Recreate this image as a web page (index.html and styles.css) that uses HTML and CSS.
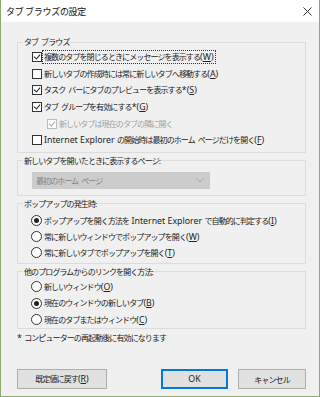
FILE: index.html
```html
<!DOCTYPE html>
<html lang="ja">
  <head>
    <meta charset="UTF-8" />
    <meta name="viewport" content="width=device-width, initial-scale=1.0" />
    <title>タブ ブラウズの設定</title>
    <link rel="stylesheet" href="styles.css">
  </head>
  <body>
    <div class="window">
      <!-- Title bar -->
      <div class="titlebar">
        <span class="title">タブ ブラウズの設定</span>
        <svg class="close" width="9" height="9" viewBox="0 0 9 9">
          <path d="M0.5 0.5 L8.5 8.5 M8.5 0.5 L0.5 8.5" stroke="#333" stroke-width="1" fill="none" />
        </svg>
      </div>

      <div class="content">
        <!-- Section: Tab browsing -->
        <fieldset class="group group-tabs">
          <legend>タブ ブラウズ</legend>
          <div class="option">
            <span class="box checked"></span>
            <span class="label focused">複数のタブを閉じるときにメッセージを表示する<span class="en">(<u>W</u>)</span></span>
          </div>
          <div class="option">
            <span class="box"></span>
            <span class="label">新しいタブの作成時には常に新しいタブへ移動する<span class="en">(<u>A</u>)</span></span>
          </div>
          <div class="option">
            <span class="box checked"></span>
            <span class="label">タスク バーにタブのプレビューを表示する<span class="en">*(<u>S</u>)</span></span>
          </div>
          <div class="option">
            <span class="box checked"></span>
            <span class="label">タブ グループを有効にする<span class="en">*(<u>G</u>)</span></span>
          </div>
          <div class="option sub disabled">
            <span class="box checked"></span>
            <span class="label">新しいタブは現在のタブの隣に開く</span>
          </div>
          <div class="option">
            <span class="box"></span>
            <span class="label"><span class="en">Internet Explorer </span>の開始時は最初のホーム ページだけを開く<span class="en">(<u>F</u>)</span></span>
          </div>
        </fieldset>

        <!-- Section: New tab page -->
        <fieldset class="group group-newtab">
          <legend>新しいタブを開いたときに表示するページ:</legend>
          <div class="select">
            <span>最初のホーム ページ</span>
            <svg width="8" height="5" viewBox="0 0 8 5">
              <path d="M0.5 0.5 L4 4 L7.5 0.5" stroke="#a6a6a6" stroke-width="1" fill="none" />
            </svg>
          </div>
        </fieldset>

        <!-- Section: Popups -->
        <fieldset class="group group-popup">
          <legend>ポップアップの発生時:</legend>
          <div class="option">
            <span class="radio selected"></span>
            <span class="label">ポップアップを開く方法を<span class="en"> Internet Explorer </span>で自動的に判定する<span class="en">(<u>I</u>)</span></span>
          </div>
          <div class="option">
            <span class="radio"></span>
            <span class="label">常に新しいウィンドウでポップアップを開く<span class="en">(<u>W</u>)</span></span>
          </div>
          <div class="option">
            <span class="radio"></span>
            <span class="label">常に新しいタブでポップアップを開く<span class="en">(<u>T</u>)</span></span>
          </div>
        </fieldset>

        <!-- Section: Links from other programs -->
        <fieldset class="group group-links">
          <legend>他のプログラムからのリンクを開く方法:</legend>
          <div class="option">
            <span class="radio"></span>
            <span class="label">新しいウィンドウ<span class="en">(<u>O</u>)</span></span>
          </div>
          <div class="option">
            <span class="radio selected"></span>
            <span class="label">現在のウィンドウの新しいタブ<span class="en">(<u>B</u>)</span></span>
          </div>
          <div class="option">
            <span class="radio"></span>
            <span class="label">現在のタブまたはウィンドウ<span class="en">(<u>C</u>)</span></span>
          </div>
        </fieldset>

        <p class="note"><span class="en">* </span>コンピューターの再起動後に有効になります</p>

        <!-- Dialog buttons -->
        <div class="buttons">
          <button class="btn btn-reset">既定値に戻す<span class="en">(<u>R</u>)</span></button>
          <button class="btn btn-ok"><span class="en">OK</span></button>
          <button class="btn btn-cancel">キャンセル</button>
        </div>
      </div>
    </div>
  </body>
</html>
```

FILE: styles.css
```css
body {
  margin: 0;
  font-family: "Noto Sans CJK JP", sans-serif;
  font-size: 8px;
  letter-spacing: -0.9px;
  word-spacing: 2px;
  color: #222;
}
.en {
  font-family: "Noto Sans", "Noto Sans CJK JP", sans-serif;
  font-size: 8.8px;
  letter-spacing: 0;
  word-spacing: 0;
}
.window {
  box-sizing: border-box;
  width: 320px;
  height: 397px;
  border: 1px solid #8fab6c;
  border-top: none;
  background-color: #f0f0f0;
  display: flex;
  flex-direction: column;
}
.titlebar {
  height: 22px;
  background-color: #fff;
  display: flex;
  align-items: center;
  justify-content: space-between;
  padding: 0 7px 0 5px;
}
.title {
  font-size: 9px;
  letter-spacing: -0.3px;
  word-spacing: 0;
  color: #111;
}
.close {
  display: block;
}
.content {
  flex: 1;
  display: flex;
  flex-direction: column;
  padding: 14px 13px 7px 16px;
}
.group {
  margin: 0;
  border: 1px solid #dcdcdc;
  padding: 0 0 0 5px;
  min-width: 0;
}
.group legend {
  padding: 0 1px;
  line-height: 12px;
}
.group + .group {
  margin-top: 2px;
}
.group-tabs {
  padding-top: 1px;
  padding-bottom: 3px;
}
.group-tabs .option {
  height: 16.6px;
}
.group-newtab {
  padding-top: 5px;
  padding-bottom: 6px;
}
.group-popup {
  padding-top: 3px;
  padding-bottom: 2px;
}
.group-popup .option {
  height: 16px;
}
.group-links {
  padding-top: 1px;
  padding-bottom: 0;
}
.group-links .option {
  height: 16.5px;
}
.option {
  display: flex;
  align-items: center;
  margin-left: 9px;
}
.option.sub {
  margin-left: 24px;
}
.label {
  margin-left: 2px;
  line-height: 12px;
  white-space: nowrap;
}
.label.focused {
  outline: 1px dotted #333;
  outline-offset: 0;
  padding: 0 1px;
  margin-left: 1px;
}
.box {
  box-sizing: border-box;
  width: 10px;
  height: 10px;
  border: 1px solid #333;
  background-color: #fff;
  position: relative;
  flex: none;
}
.box.checked::after {
  content: "";
  position: absolute;
  left: 2px;
  top: 0;
  width: 3px;
  height: 5px;
  border: solid #222;
  border-width: 0 1px 1px 0;
  transform: rotate(40deg);
}
.disabled .box {
  border-color: #bcbcbc;
}
.disabled .box.checked::after {
  border-color: #a8a8a8;
}
.disabled .label {
  color: #a0a0a0;
}
.radio {
  box-sizing: border-box;
  width: 11px;
  height: 11px;
  border: 1px solid #333;
  border-radius: 50%;
  background-color: #fff;
  position: relative;
  flex: none;
  margin-left: -1px;
}
.radio.selected::after {
  content: "";
  position: absolute;
  left: 2px;
  top: 2px;
  width: 5px;
  height: 5px;
  border-radius: 50%;
  background-color: #222;
}
.select {
  box-sizing: border-box;
  width: 178px;
  height: 17px;
  margin-left: 9px;
  background-color: #cccccc;
  color: #838383;
  display: flex;
  align-items: center;
  justify-content: space-between;
  padding: 0 6px 0 4px;
}
.select svg {
  display: block;
}
.note {
  margin: 3px 0 0 0;
  line-height: 12px;
}
.buttons {
  margin-top: auto;
  display: flex;
  gap: 10px;
}
.btn {
  box-sizing: border-box;
  height: 20px;
  font-family: inherit;
  font-size: 8px;
  letter-spacing: -0.9px;
  color: #222;
  background-color: #e1e1e1;
  border: 1px solid #adadad;
  padding: 0;
}
.btn-reset {
  width: 90px;
}
.btn-ok {
  width: 67px;
  margin-left: auto;
  border-color: #0078d7;
  box-shadow: inset 0 0 0 1px #0078d7;
}
.btn-cancel {
  width: 68px;
}
```
